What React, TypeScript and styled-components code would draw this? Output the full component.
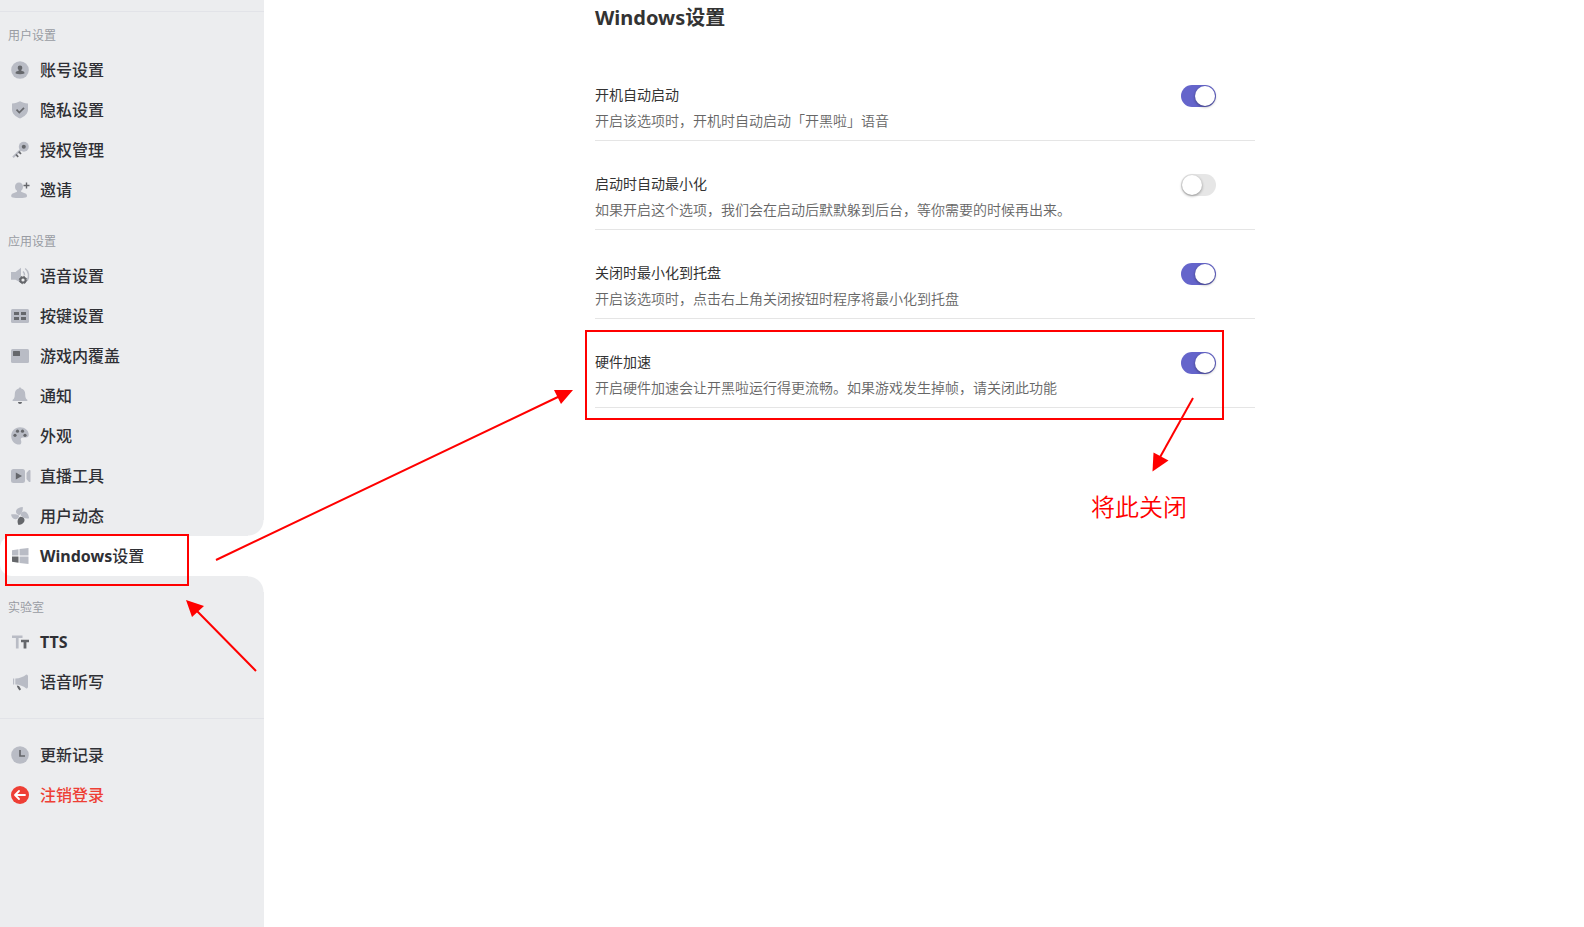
import React from "react";
import styled, { createGlobalStyle, css } from "styled-components";

const Global = createGlobalStyle`
  *, *::before, *::after { box-sizing: border-box; }
  body {
    margin: 0;
    background: #fff;
    color: #333;
    font-family: "Noto Sans", "Noto Sans CJK SC", sans-serif;
  }
`;

const Page = styled.div`
  position: relative;
  display: flex;
  min-height: 100vh;
  overflow: hidden;
`;

const Sidebar = styled.aside`
  flex: 0 0 264px;
  background: #ecedef;
`;

const Divider = styled.hr<{ $top: number; $bottom: number }>`
  height: 1px;
  border: 0;
  margin: ${(p) => p.$top}px 0 ${(p) => p.$bottom}px;
  background: #e2e3e8;
`;

const Group = styled.section`
  & + & { margin-top: 8px; }
`;

const GroupTitle = styled.h2`
  margin: 0;
  padding: 15px 8px 5px;
  font-size: 12px;
  line-height: 18px;
  font-weight: 400;
  color: #999ca3;
`;

const List = styled.ul`
  list-style: none;
  margin: 0;
  padding: 0;
`;

const cornerPiece = css`
  content: "";
  position: absolute;
  right: 0;
  width: 16px;
  height: 16px;
`;

const ItemButton = styled.button<{ $active?: boolean; $danger?: boolean }>`
  position: relative;
  display: flex;
  align-items: center;
  gap: 10px;
  width: 100%;
  height: 40px;
  padding: 0 10px;
  border: 0;
  border-radius: ${(p) => (p.$active ? "12px 0 0 12px" : "0")};
  background: ${(p) => (p.$active ? "#fff" : "transparent")};
  color: ${(p) => (p.$danger ? "#ee3f35" : "#2f3035")};
  font-family: inherit;
  font-size: 16px;
  line-height: 24px;
  font-weight: 500;
  text-align: left;
  cursor: pointer;

  ${(p) => p.$active && css`
    &::before {
      ${cornerPiece}
      bottom: 100%;
      background: radial-gradient(circle at 0 0, transparent 15px, #fff 16px);
    }
    &::after {
      ${cornerPiece}
      top: 100%;
      background: radial-gradient(circle at 0 100%, transparent 15px, #fff 16px);
    }
  `}
`;

const Latin = styled.span`
  font-weight: 700;
`;

const IconSvg = styled.svg`
  flex: none;
  width: 20px;
  height: 20px;
  overflow: visible;
`;

const Main = styled.main`
  flex: 1;
  min-width: 0;
  padding: 4px 32px 40px 34px;
`;

const Content = styled.div`
  max-width: 660px;
  margin: 0 auto;
`;

const PageTitle = styled.h1`
  margin: 0 0 20px;
  font-size: 20px;
  line-height: 28px;
  font-weight: 700;
`;

const Row = styled.div`
  position: relative;
  display: flex;
  align-items: flex-start;
  justify-content: space-between;
  padding: 33px 39px 9px 0;
  border-bottom: 1px solid #e5e5e5;
`;

const RowText = styled.div`
  display: flex;
  flex-direction: column;
  gap: 6px;
  font-size: 14px;
  line-height: 20px;
`;

const RowLabel = styled.label`
  color: #333;
`;

const RowHint = styled.span`
  font-weight: 350;
  color: #666;
`;

const Switch = styled.input`
  appearance: none;
  flex: none;
  display: flex;
  width: 35px;
  height: 22px;
  margin: 0;
  padding: 1px;
  border-radius: 11px;
  background: #e6e6e6;
  cursor: pointer;

  &::before {
    content: "";
    width: 20px;
    height: 20px;
    border-radius: 50%;
    background: #fff;
    box-shadow: 0 1px 3px rgba(0, 0, 0, 0.4);
  }
  &:checked { background: #6565cb; justify-content: flex-end; }
`;

const Outline = styled.span<{ $inset: string }>`
  position: absolute;
  inset: ${(p) => p.$inset};
  border: 2px solid #f00;
  pointer-events: none;
`;

const ArrowLayer = styled.svg`
  position: absolute;
  top: 0;
  left: 0;
  width: 600px;
  height: 700px;
  pointer-events: none;
`;

const NoteBox = styled.div`
  position: absolute;
  top: 74px;
  right: 60px;
  display: flex;
  flex-direction: column;
  align-items: flex-end;
  pointer-events: none;
`;

const NoteArrow = styled.svg`
  width: 60px;
  height: 98px;
`;

const NoteText = styled.span`
  font-size: 24px;
  line-height: 32px;
  padding-right: 8px;
  font-weight: 350;
  color: #f00;
`;

const L = "#b9bcc5";
const D = "#65676b";

const icons: Record<string, React.ReactNode> = {
  account: (
    <>
      <circle cx="10" cy="10" r="8.8" fill={L} />
      <path fill={D} d="M10 5.4a2.3 2.3 0 0 1 2.3 2.4c0 1-.5 1.7-1 2.2v.7l2.3.9c.5.2.8.7.8 1.2v.8c-2.4 1-6.400 1-8.800 0v-.8c0-.5.3-1 .8-1.200l2.300-.9V10c-.5-.5-1-1.200-1-2.200A2.300 2.300 0 0 1 10 5.400z" />
    </>
  ),
  privacy: (
    <>
      <path fill={L} d="M10 1.200c2.300 1.300 4.800 2 8 2.200v6.200c0 4-3.400 7.200-8 8.900-4.600-1.700-8-4.900-8-8.900V3.400c3.200-.2 5.700-.9 8-2.200z" />
      <path fill="none" stroke={D} strokeWidth="1.700" d="M6.500 9.700 9.300 12.500 14 7.800" />
    </>
  ),
  key: (
    <>
      <path stroke={L} strokeWidth="2" d="M3 17.300 10.500 10" />
      <circle cx="13.800" cy="6.700" r="5" fill={L} />
      <circle cx="13.800" cy="6.700" r="2" fill={D} />
      <path stroke={D} strokeWidth="1.800" d="M6 14.500 8.200 16.800M8.800 11.700 11 14" />
    </>
  ),
  invite: (
    <>
      <path fill={L} d="M9 2.500c2.500 0 4 1.900 4 4.300 0 1.800-.8 3.200-1.900 4v1l4.300 1.700c1 .4 1.600 1.200 1.600 2.300 0 1-.5 1.500-1.500 1.700-4 .7-9 .7-12.800 0-1-.2-1.500-.7-1.500-1.700 0-1.100.6-1.900 1.600-2.300L7 11.800v-1c-1.200-.8-2-2.200-2-4 0-2.400 1.500-4.300 4-4.300z" />
      <path stroke={D} strokeWidth="1.400" d="M16.500 2.500v6M13.500 5.500h6" />
    </>
  ),
  voice: (
    <>
      <path fill={L} d="M1 6h4.500L11 1.800v15L5.500 13.800H1z" />
      <path fill="none" stroke={L} strokeWidth="1.500" d="M13 5.500c1.200 1 1.700 2.300 1.500 3.800M15.200 2.500c3.800 3 4.300 8.200 2 12" />
      <circle cx="13" cy="14" r="2.600" fill="#ecedef" stroke={D} strokeWidth="2" />
      <circle cx="13" cy="14" r="3.700" fill="none" stroke={D} strokeWidth="1" strokeDasharray="1.500 1.400" />
    </>
  ),
  keys: (
    <>
      <rect x="1" y="3" width="18" height="14" rx="1.500" fill={L} />
      <path fill={D} d="M4 6h5v3H4zM11 6h5v3h-5zM4 11h5v3H4zM11 11h5v3h-5z" />
    </>
  ),
  overlay: (
    <>
      <rect x="1" y="3" width="18" height="14" rx="1.500" fill={L} />
      <rect x="3" y="5" width="7" height="5" rx=".5" fill={D} />
    </>
  ),
  bell: (
    <>
      <path fill={L} d="M10 1.500c.7 0 1.200.4 1.200 1.100 2.700.6 4 2.600 4 5.400 0 3.300.6 4.800 2.100 5.800.4.300.2 1.200-.4 1.200H3.100c-.6 0-.8-.9-.4-1.200 1.500-1 2.100-2.500 2.100-5.800 0-2.800 1.300-4.800 4-5.400 0-.7.500-1.100 1.200-1.100z" />
      <path fill={D} d="M8 16h4c0 1.200-.9 2-2 2s-2-.8-2-2z" />
    </>
  ),
  palette: (
    <>
      <path fill={L} d="M10 1.200c5 0 8.800 3.300 8.800 7.600 0 2.200-1.400 2.900-3.300 2.700l-2.500-.1c-2 0-2.700 1.300-2 3.100.6 1.500.5 4.100-1.700 4.100C4.800 18.600 1.200 15 1.200 10S5 1.200 10 1.200z" />
      <g fill={D}>
        <circle cx="7.500" cy="5.200" r="1.600" />
        <circle cx="12.500" cy="5.200" r="1.600" />
        <circle cx="5" cy="9.300" r="1.600" />
        <circle cx="15" cy="9.300" r="1.600" />
      </g>
    </>
  ),
  live: (
    <>
      <rect x="1" y="3" width="14" height="14" rx="2.500" fill={L} />
      <path fill={L} d="M16.500 7 18.800 4.300c.7-.7 1.700-.4 1.700.5v10.400c0 .9-1 1.200-1.700.5L16.500 13z" />
      <path fill={D} d="M5.800 6.500 12 10l-6.200 3.500z" />
    </>
  ),
  activity: (
    <>
      <path fill={L} d="M12.800 1C8.500 1.300 5.800 3.300 6 6c.1 1.400 1.300 2.500 3.200 3.200 2.800-1.600 3.800-4.500 3.600-8.200z" />
      <path fill={L} d="M1 8.600c2.600-.6 6-.4 8.200 1.200-.4 2.400-2 3.600-4 3.400C3 13 1.500 11.300 1 8.600z" />
      <path fill={L} d="M10.600 9.300c.2-2.500 1.800-4 3.800-3.800 2.600.3 4.300 3.200 4.700 6.700-3.300.7-6.700-.4-8.500-2.900z" />
      <path fill={D} d="M10.200 10.800c2.300-.1 4.200 1 4.300 2.900.2 2.800-2.400 4.800-6 5.400-1.600-3.300-1-6.500 1.700-8.300z" />
    </>
  ),
  windows: (
    <>
      <path fill={L} d="M2 4.300 8.500 3.300v6.200H2zM9.500 3.100 18.500 2v7.500h-9zM9.500 10.500h9V18l-9-1.100z" />
      <path fill={D} d="M2 10.500h6.500v6.200L2 15.800z" />
    </>
  ),
  tts: (
    <>
      <path fill={L} d="M2 3.500h10.500V6H8.600v10.500H5.900V6H2z" />
      <path fill={D} d="M11 7.800h8v2.400h-2.600v6.300h-2.800v-6.300H11z" />
    </>
  ),
  dictation: (
    <>
      <path fill={L} d="M3 6.500h1.200v6H3zM5.300 6.500c4.500-.2 8-1.500 11-4 1 0 1.700 1 1.700 1.800v10.400c0 1-.7 1.800-1.700 1.800-3-2.500-6.500-3.800-11-4z" />
      <path fill={D} d="M6.800 13.500 9 14l2 3.300-1.300 1.200c-1.400-1.200-2.400-2.800-2.900-5z" />
    </>
  ),
  history: (
    <>
      <circle cx="10" cy="10" r="8.800" fill={L} />
      <path fill="none" stroke={D} strokeWidth="1.700" d="M10 5v6h5" />
    </>
  ),
  logout: (
    <>
      <circle cx="10" cy="10" r="9" fill="#ee3f35" />
      <path fill="none" stroke="#fff" strokeWidth="1.800" strokeLinecap="round" strokeLinejoin="round" d="M15 10H5.200M9 6l-4 4 4 4" />
    </>
  ),
};

type Entry = { icon: string; latin?: string; text?: string; active?: boolean; danger?: boolean };

const Items = ({ entries }: { entries: Entry[] }) => (
  <List>
    {entries.map((e) => (
      <li key={e.icon}>
        <ItemButton type="button" $active={e.active} $danger={e.danger} aria-current={e.active ? "page" : undefined}>
          <IconSvg viewBox="0 0 20 20" aria-hidden="true">{icons[e.icon]}</IconSvg>
          <span>
            {e.latin && <Latin>{e.latin}</Latin>}
            {e.text}
          </span>
          {e.active && <Outline $inset="-2px 75px -10px 5px" />}
        </ItemButton>
      </li>
    ))}
  </List>
);

const groups: { title: string; entries: Entry[] }[] = [
  {
    title: "用户设置",
    entries: [
      { icon: "account", text: "账号设置" },
      { icon: "privacy", text: "隐私设置" },
      { icon: "key", text: "授权管理" },
      { icon: "invite", text: "邀请" },
    ],
  },
  {
    title: "应用设置",
    entries: [
      { icon: "voice", text: "语音设置" },
      { icon: "keys", text: "按键设置" },
      { icon: "overlay", text: "游戏内覆盖" },
      { icon: "bell", text: "通知" },
      { icon: "palette", text: "外观" },
      { icon: "live", text: "直播工具" },
      { icon: "activity", text: "用户动态" },
      { icon: "windows", latin: "Windows", text: "设置", active: true },
    ],
  },
  {
    title: "实验室",
    entries: [
      { icon: "tts", latin: "TTS" },
      { icon: "dictation", text: "语音听写" },
    ],
  },
];

const settings = [
  { id: "autostart", label: "开机自动启动", hint: "开启该选项时，开机时自动启动「开黑啦」语音", on: true },
  { id: "minimized", label: "启动时自动最小化", hint: "如果开启这个选项，我们会在启动后默默躲到后台，等你需要的时候再出来。", on: false },
  { id: "tray", label: "关闭时最小化到托盘", hint: "开启该选项时，点击右上角关闭按钮时程序将最小化到托盘", on: true },
  { id: "gpu", label: "硬件加速", hint: "开启硬件加速会让开黑啦运行得更流畅。如果游戏发生掉帧，请关闭此功能", on: true, marked: true },
];

export default function App() {
  return (
    <Page>
      <Global />
      <Sidebar>
        <nav>
          <Divider $top={11} $bottom={0} />
          {groups.map((g) => (
            <Group key={g.title}>
              <GroupTitle>{g.title}</GroupTitle>
              <Items entries={g.entries} />
            </Group>
          ))}
          <Divider $top={16} $bottom={16} />
          <Items
            entries={[
              { icon: "history", text: "更新记录" },
              { icon: "logout", text: "注销登录", danger: true },
            ]}
          />
        </nav>
      </Sidebar>
      <Main>
        <Content>
          <PageTitle>Windows设置</PageTitle>
          {settings.map((s) => (
            <Row key={s.id}>
              <RowText>
                <RowLabel htmlFor={s.id}>{s.label}</RowLabel>
                <RowHint>{s.hint}</RowHint>
              </RowText>
              <Switch id={s.id} type="checkbox" role="switch" defaultChecked={s.on} />
              {s.marked && (
                <>
                  <Outline $inset="11px 31px -13px -10px" />
                  <NoteBox>
                    <NoteArrow viewBox="0 0 60 98" aria-hidden="true">
                      <path stroke="#f00" strokeWidth="2" d="M58 5 24 66" />
                      <path fill="#f00" d="M17.500 78.500 18.500 59.500l15 8z" />
                    </NoteArrow>
                    <NoteText>将此关闭</NoteText>
                  </NoteBox>
                </>
              )}
            </Row>
          ))}
        </Content>
      </Main>
      <ArrowLayer viewBox="0 0 600 700" aria-hidden="true">
        <path stroke="#f00" strokeWidth="2" d="M216 560 560 396M256 671 196 610" />
        <path fill="#f00" d="M573 390 554 390 561 404zM186 600 204 606 192 617z" />
      </ArrowLayer>
    </Page>
  );
}
